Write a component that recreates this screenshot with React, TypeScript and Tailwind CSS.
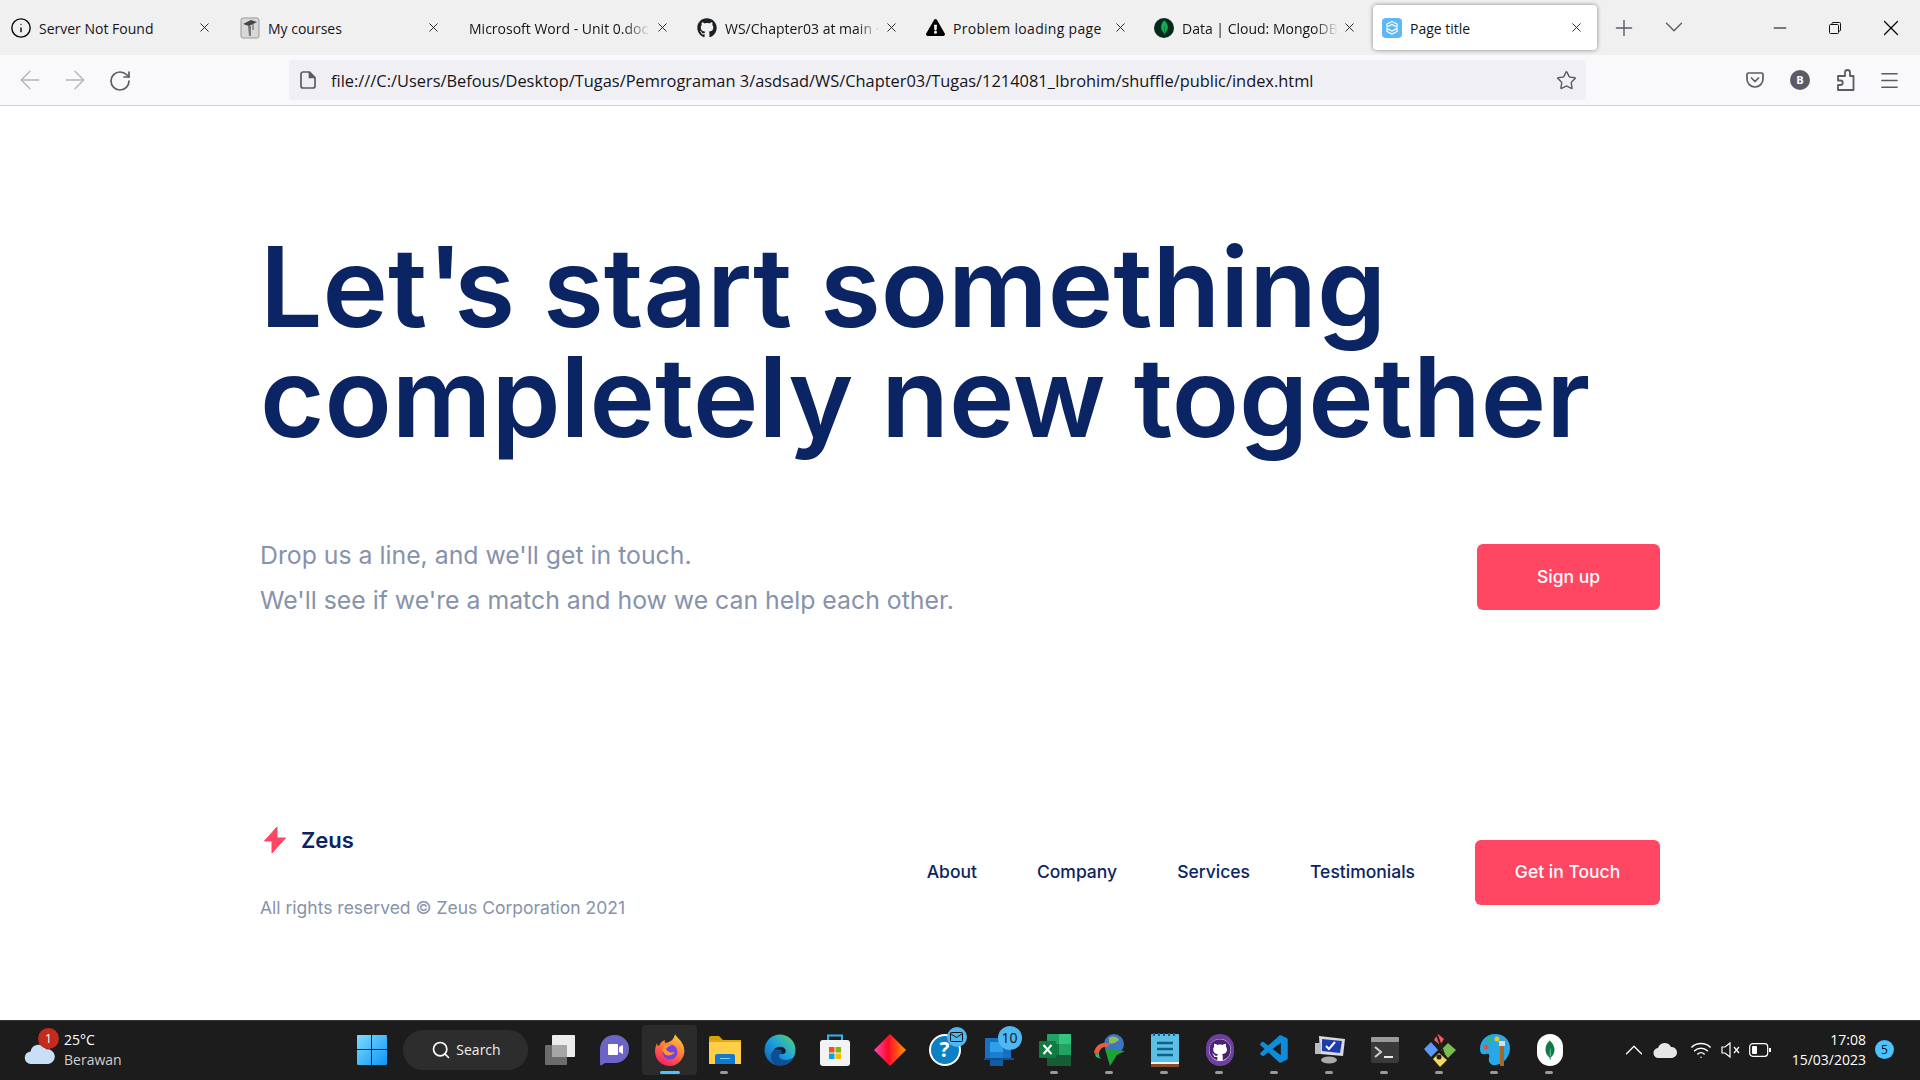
import React from 'react';
import { ArrowLeft, ArrowRight, ChevronDown, ChevronUp, Info, Menu, Minus, Plus, RotateCw, Search, Star, Wifi, X } from 'lucide-react';
import { FaGithub, FaExclamationTriangle } from 'react-icons/fa';
import { SiMongodb } from 'react-icons/si';
import { VscVscode } from 'react-icons/vsc';

const uiFont = { className: "font-['Open_Sans','Noto_Sans',sans-serif]" };

const MoodleIcon = () => (
  <svg width="20" height="22" viewBox="0 0 20 22">
    <rect x="1" y="1" width="18" height="20" rx="2" fill="#d8d8d8" stroke="#999" />
    <path d="M3 7l8-4 6 2-8 4z" fill="#444" />
    <path d="M8 9h3v10H9z" fill="#777" />
    <path d="M13 7v6" stroke="#555" />
  </svg>
);

const MongoTab = () => (
  <span className="w-5 h-5 rounded-full bg-[#04291f] flex items-center justify-center">
    <SiMongodb className="text-[#13aa52] text-[15px]" />
  </span>
);

const PageTitleIcon = () => (
  <svg width="20" height="20" viewBox="0 0 20 20">
    <rect width="20" height="20" rx="4" fill="#5cb8f6" />
    <path d="M10 3.500l5 2.500v3l-5-2.500-5 2.500V6zM5 10.500l5 2.500 5-2.500v3L10 16l-5-2.500z" fill="none" stroke="#fff" strokeWidth="1.2" />
  </svg>
);

const tabs = [
  { title: 'Server Not Found', pad: 'pl-[12px]', icon: <Info size={22} strokeWidth={1.5} className="shrink-0 text-black" /> },
  { title: 'My courses', pad: 'pl-[12px]', icon: <MoodleIcon /> },
  { title: 'Microsoft Word - Unit 0.doc', pad: 'pl-[12px]', fade: true },
  { title: 'WS/Chapter03 at main · Ibrohim', pad: 'pl-[11px]', icon: <FaGithub className="text-[20px] text-[#1b1f23]" />, fade: true },
  { title: 'Problem loading page', pad: 'pl-[10px] tracking-[0.3px]', icon: <FaExclamationTriangle className="text-[19px] text-black" /> },
  { title: 'Data | Cloud: MongoDB Cloud', pad: 'pl-[10px]', icon: <MongoTab />, fade: true },
];

const Tab = ({ title, icon, fade, pad }: { title: string; icon?: React.ReactNode; fade?: boolean; pad: string }) => (
  <div className={`w-[223px] h-[45px] shrink-0 flex items-center pr-[10px] ${pad}`}>
    {icon && <span className="w-5 mr-2 shrink-0 flex justify-center">{icon}</span>}
    <span className={`flex-1 pt-[1px] whitespace-nowrap overflow-hidden text-[14px] text-[#15141a] ${fade ? '[mask-image:linear-gradient(to_right,black_85%,transparent)]' : ''}`}>{title}</span>
    <X size={15} strokeWidth={1.5} className="ml-1 shrink-0 text-[#222]" />
  </div>
);

const PocketIcon = () => (
  <svg width="20" height="20" viewBox="0 0 20 20" fill="none" stroke="#5b5b66" strokeWidth="1.7">
    <path d="M3.500 3h13A1.500 1.500 0 0 1 18 4.500V9a8 8 0 0 1-16 0V4.500A1.500 1.500 0 0 1 3.500 3z" />
    <path d="M6.500 8l3.500 3.500L13.500 8" strokeLinecap="round" strokeLinejoin="round" />
  </svg>
);

const PuzzleIcon = () => (
  <svg width="20" height="22" viewBox="0 0 20 22" fill="none" stroke="#5b5b66" strokeWidth="1.8" strokeLinejoin="round">
    <path d="M6 7h4V3.500a2.500 2.500 0 0 1 5 0V7h3.500v14H3v-5h2.500a2.200 2.200 0 0 0 0-4.500H3V7z" />
  </svg>
);

const RestoreIcon = () => (
  <svg width="12" height="12" viewBox="0 0 12 12" fill="none" stroke="#111" strokeWidth="1">
    <rect x="0.500" y="2.500" width="9" height="9" rx="1" />
    <path d="M3 2.500V1.500a1 1 0 0 1 1-1h6.500a1 1 0 0 1 1 1V8a1 1 0 0 1-1 1h-1" />
  </svg>
);

const BrowserChrome = () => (
  <header className={uiFont.className}>
    <div className="h-[55px] bg-[#f0f0f0] flex items-start pt-[5px] pl-[1px] -ml-[2px]">
      <div className="flex gap-[6px]">
        {tabs.map((tab) => (
          <Tab key={tab.title} {...tab} />
        ))}
        <div className="w-[224px] h-[45px] shrink-0 bg-white rounded-[4px] shadow-[0_0_4px_rgba(0,0,0,0.45)] flex items-center pl-[9px] pr-[13px]">
          <PageTitleIcon />
          <span className="ml-[8px] pt-[1px] flex-1 text-[14px] text-[#15141a]">Page title</span>
          <X size={15} strokeWidth={1.5} className="text-[#222]" />
        </div>
      </div>
      <Plus size={26} strokeWidth={1.3} className="ml-[14px] mt-[10px] text-[#5b5b66]" />
      <ChevronDown size={30} strokeWidth={1.1} className="ml-[22px] mt-[7px] text-[#5b5b66]" />
      <div className="ml-auto flex items-center h-[45px]">
        <Minus size={20} strokeWidth={1.2} className="mr-[39px] text-black" />
        <span className="mr-[37px]"><RestoreIcon /></span>
        <X size={26} strokeWidth={1.1} className="mr-[16px] text-black" />
      </div>
    </div>
    <div className="h-[51px] bg-[#f9f9fb] border-b border-[#cfcfd8] flex items-center">
      <ArrowLeft size={30} strokeWidth={1.1} className="ml-[15px] text-[#b4b4ba]" />
      <ArrowRight size={30} strokeWidth={1.1} className="ml-[15px] text-[#b4b4ba]" />
      <RotateCw size={24} strokeWidth={1.7} className="ml-[18px] mt-[1px] text-[#5b5b66]" />
      <div className="ml-[157px] w-[1297px] h-[40px] rounded-[4px] bg-[#f0f0f4] flex items-center pl-[11px] pr-[9px]">
        <svg width="16" height="18" viewBox="0 0 16 18" fill="none" stroke="#5b5b66" strokeWidth="1.7">
          <path d="M3 1h6.500L15 6.500V15a2 2 0 0 1-2 2H3a2 2 0 0 1-2-2V3a2 2 0 0 1 2-2z" />
          <path d="M9.500 1v5.500H15" fill="#5b5b66" />
        </svg>
        <span className="ml-[15px] pt-[3px] flex-1 text-[16.400px] text-[#15141a] whitespace-nowrap">file:///C:/Users/Befous/Desktop/Tugas/Pemrograman 3/asdsad/WS/Chapter03/Tugas/1214081_Ibrohim/shuffle/public/index.html</span>
        <Star size={21} strokeWidth={1.6} className="text-[#5b5b66]" />
      </div>
      <span className="ml-[159px]"><PocketIcon /></span>
      <span className="ml-[25px] w-5 h-5 rounded-full bg-[#5b5b66] text-white text-[11px] font-bold flex items-center justify-center">B</span>
      <span className="ml-[25px]"><PuzzleIcon /></span>
      <Menu size={23} strokeWidth={1.4} className="ml-[23px] text-[#5b5b66]" />
    </div>
  </header>
);

const Hero = () => (
  <main className="flex-1 bg-white font-['Inter',sans-serif] pl-[260px] pr-[260px] pt-[126px]">
    <h1 className="text-[110.700px] leading-[110px] font-semibold text-[#0b2463] whitespace-nowrap">
      Let<span className="tracking-[-0.08em]">'</span>s start something<br />completely new together
    </h1>
    <div className="mt-[81px] flex items-center justify-between">
      <div className="text-[24.800px] leading-[45px] text-[#8792ab]">
        <p>Drop us a line, and we'll get in touch.</p>
        <p>We'll see if we're a match and how we can help each other.</p>
      </div>
      <button className="w-[183px] h-[66px] mb-[2px] rounded-md bg-[#ff4663] text-white text-[17.500px] font-medium">Sign up</button>
    </div>
    <footer className="mt-[199px] flex items-center justify-between">
      <div className="pt-[2px]">
        <div className="flex items-center">
          <svg width="22" height="26" viewBox="0 0 22 26" className="ml-[4px]">
            <path d="M13 0L0.500 14H8L8 26L21.500 11H13z" fill="#ff4663" stroke="#ff4663" strokeLinejoin="round" />
          </svg>
          <span className="ml-[15px] text-[22px] leading-[32px] font-semibold text-[#0b2463]">Zeus</span>
        </div>
        <p className="mt-[38px] text-[17.500px] leading-[28px] text-[#8792ab]">All rights reserved © Zeus Corporation 2021</p>
      </div>
      <nav className="flex items-center gap-[60px] text-[17.500px] font-medium text-[#0b2463]">
        <a>About</a>
        <a>Company</a>
        <a>Services</a>
        <a>Testimonials</a>
        <button className="w-[185px] h-[65px] rounded-md bg-[#ff4663] text-white font-medium">Get in Touch</button>
      </nav>
    </footer>
  </main>
);

const WinLogo = () => (
  <svg width="30" height="30" viewBox="0 0 30 30">
    <defs>
      <linearGradient id="win" x1="0" y1="0" x2="1" y2="1">
        <stop offset="0" stopColor="#7fdcfd" />
        <stop offset="1" stopColor="#0d95f5" />
      </linearGradient>
    </defs>
    <path d="M0 1a1 1 0 0 1 1-1h13v14H0zM15 0h14a1 1 0 0 1 1 1v13H15zM0 15h14v15H1a1 1 0 0 1-1-1zM15 15h15v14a1 1 0 0 1-1 1H15z" fill="url(#win)" />
  </svg>
);

const TaskViewIcon = () => (
  <svg width="30" height="30" viewBox="0 0 30 30">
    <rect x="0" y="10" width="22" height="20" rx="1" fill="#6c6c6c" />
    <rect x="7" y="0" width="23" height="22" rx="1" fill="#ececec" />
    <rect x="7" y="10" width="15" height="12" fill="#a6a6a6" />
  </svg>
);

const MeetIcon = () => (
  <svg width="30" height="32" viewBox="0 0 30 32">
    <path d="M15 1a14 14 0 0 1 0 28H5l-3 2c-1 1-2 0-2-1V15A14 14 0 0 1 15 1z" fill="#6d64c8" />
    <rect x="8" y="10" width="10" height="11" rx="1" fill="#fff" />
    <path d="M19 13l4-2v9l-4-2z" fill="#fff" />
  </svg>
);

const FirefoxIcon = () => (
  <svg width="30" height="32" viewBox="0 0 30 32">
    <defs>
      <linearGradient id="ffbody" x1="0.700" y1="0" x2="0.200" y2="1">
        <stop offset="0" stopColor="#ffc83a" />
        <stop offset="0.500" stopColor="#ff7139" />
        <stop offset="1" stopColor="#f5156c" />
      </linearGradient>
    </defs>
    <path d="M20 0c1 3 5 5 7 9 3 5 3 10 1 14-3 6-8 9-13 9C7 32 0 26 0 17c0-3 1-6 2-8 0 2 1 3 2 3 1-3 3-5 6-6-1 2 0 3 1 3 4-1 8-3 9-9z" fill="url(#ffbody)" />
    <circle cx="15" cy="18" r="7.500" fill="#7542e5" />
    <path d="M8 13c2-2 6-3 9-2-3 1-5 2-6 4 1 3 5 4 9 3-2 3-6 4-9 3-3-2-4-5-3-8z" fill="#ff9a2e" />
  </svg>
);

const FolderIcon = () => (
  <svg width="32" height="28" viewBox="0 0 32 28">
    <path d="M0 2a2 2 0 0 1 2-2h8l4 4h-14z" fill="#d9a106" />
    <path d="M0 4h32v24H0z" fill="#ffcf49" />
    <path d="M0 4h32v2H0z" fill="#e2a90f" />
    <path d="M6 20a2 2 0 0 1 2-2h16a2 2 0 0 1 2 2v8H6z" fill="#0f7ad1" />
    <path d="M11 22h10v1H11z" fill="#8fd0ff" />
  </svg>
);

const EdgeIcon = () => (
  <svg width="32" height="32" viewBox="0 0 32 32">
    <defs>
      <linearGradient id="edge" x1="0" y1="1" x2="1" y2="0">
        <stop offset="0" stopColor="#0c59a4" />
        <stop offset="0.500" stopColor="#1b9de2" />
        <stop offset="1" stopColor="#5ad66f" />
      </linearGradient>
    </defs>
    <circle cx="16" cy="16" r="15.500" fill="url(#edge)" />
    <path d="M12 31C6 28 5 20 10 16c4-3 10-2 11 1 1 2-1 3-4 3-2 0-3 3 0 5 4 2 9 1 13-2-3 6-10 10-18 8z" fill="#0c4f96" />
    <path d="M17 20c4 0 6-2 4-5s-9-3-11 1c2-1 5-1 7 0 1 1 1 3 0 4z" fill="#1c1c1c" />
  </svg>
);

const StoreIcon = () => (
  <svg width="30" height="32" viewBox="0 0 30 32">
    <rect x="0" y="6" width="30" height="26" rx="3" fill="#f3f3f3" />
    <path d="M8 6V1.500h14V6" fill="none" stroke="#29b6f6" strokeWidth="2" />
    <rect x="9" y="13" width="5.500" height="5.500" fill="#f25022" />
    <rect x="15.500" y="13" width="5.500" height="5.500" fill="#7fba00" />
    <rect x="9" y="19.500" width="5.500" height="5.500" fill="#00a4ef" />
    <rect x="15.500" y="19.500" width="5.500" height="5.500" fill="#ffb900" />
  </svg>
);

const DiamondIcon = () => (
  <svg width="32" height="32" viewBox="0 0 32 32">
    <defs>
      <linearGradient id="diamond" x1="0" y1="0" x2="1" y2="0">
        <stop offset="0" stopColor="#ff47b0" />
        <stop offset="0.450" stopColor="#ff0a2a" />
        <stop offset="1" stopColor="#ff9900" />
      </linearGradient>
    </defs>
    <path d="M16 0l16 16-16 16L0 16z" fill="url(#diamond)" />
  </svg>
);

const HelpIcon = () => (
  <span className="relative w-8 h-8 rounded-full bg-[#0d7fc4] border-2 border-white flex items-center justify-center text-white font-bold text-[21px] leading-none">
    ?
    <span className="absolute -top-[9px] -right-[8px] w-5 h-5 rounded-full bg-[#4fb8f0] flex items-center justify-center">
      <svg width="13" height="10" viewBox="0 0 13 10" fill="none" stroke="#111" strokeWidth="1">
        <rect x="0.500" y="0.500" width="12" height="9" rx="1" />
        <path d="M0.500 1.500l6 4 6-4" />
      </svg>
    </span>
  </span>
);

const MsIcon = () => (
  <span className="relative w-8 h-8 flex items-end">
    <svg width="30" height="30" viewBox="0 0 30 30">
      <rect x="1" y="2" width="26" height="21" fill="#1b6fc2" />
      <rect x="6" y="6" width="13" height="24" fill="#2f9fe8" />
      <rect x="6" y="16" width="13" height="7" fill="#1b7fd0" />
      <rect x="6" y="23" width="13" height="7" fill="#125ba6" />
      <rect x="0" y="22" width="30" height="2" fill="#0f4f8f" />
    </svg>
    <span className="absolute -top-[8px] -right-[6px] w-[24px] h-[24px] rounded-full bg-[#4fb8f0] text-[#111] text-[14px] flex items-center justify-center">10</span>
  </span>
);

const ExcelIcon = () => (
  <svg width="32" height="32" viewBox="0 0 32 32">
    <rect x="8" y="0" width="24" height="32" rx="1" fill="#21a366" />
    <rect x="20" y="0" width="12" height="10" fill="#33c481" />
    <rect x="20" y="10" width="12" height="11" fill="#21a366" />
    <rect x="8" y="10" width="12" height="11" fill="#107c41" />
    <rect x="8" y="21" width="24" height="11" fill="#185c37" />
    <rect x="0" y="7" width="17" height="17" rx="1" fill="#107c41" />
    <path d="M4.500 11l8 9M12.500 11l-8 9" stroke="#fff" strokeWidth="2" />
  </svg>
);

const IdmIcon = () => (
  <svg width="34" height="34" viewBox="0 0 34 34">
    <circle cx="21" cy="11" r="10" fill="#3d74c4" />
    <path d="M16 5c4-3 9-1 10 2-3 2-6 5-10 3z" fill="#8fbf4f" />
    <path d="M1 20a11 11 0 0 1 16-9l-2 3a7 7 0 0 0-9 7z" fill="#e95d3c" />
    <path d="M3 24a11 11 0 0 1-1-4l4 1a7 7 0 0 0 2 5z" fill="#38b46a" />
    <path d="M12 16l20 2-8 4-7 11z" fill="#1ba432" />
  </svg>
);

const NotepadIcon = () => (
  <svg width="28" height="34" viewBox="0 0 28 34">
    <rect x="0" y="1" width="28" height="33" rx="1" fill="#5bbfe6" />
    <rect x="0" y="31" width="28" height="3" fill="#8a4d2b" />
    <rect x="0" y="29" width="28" height="2" fill="#f1f1f1" />
    <path d="M3 0v3M8 0v3M13 0v3M18 0v3M23 0v3" stroke="#175e80" strokeWidth="2" />
    <path d="M6 10h16M6 16h16M6 22h16" stroke="#125f87" strokeWidth="2.500" />
  </svg>
);

const GitHubDesktop = () => (
  <span className="w-7 h-8 rounded-full bg-[#6f3f9e] flex items-center justify-center">
    <span className="w-[22px] h-[22px] rounded-full bg-white flex items-center justify-center">
      <FaGithub className="text-[22px] text-[#4b2374]" />
    </span>
  </span>
);

const AdminIcon = () => (
  <svg width="32" height="32" viewBox="0 0 32 32">
    <path d="M5 2l26 3-2 17-23-2z" fill="#d7dce2" />
    <path d="M8 5l20 2-2 12-18-2z" fill="#1e3bb0" />
    <path d="M12 12l3 3 6-7" stroke="#fff" strokeWidth="2" fill="none" />
    <ellipse cx="15" cy="26" rx="8" ry="3.500" fill="#aaa" />
    <rect x="1" y="9" width="6" height="11" fill="#b8bdc4" />
  </svg>
);

const TerminalIcon = () => (
  <svg width="28" height="26" viewBox="0 0 28 26">
    <rect width="28" height="26" rx="2" fill="#3a3a3a" />
    <rect width="28" height="5" rx="1" fill="#9a9a9a" />
    <path d="M4 10l6 5-6 5" stroke="#cfcfcf" strokeWidth="2" fill="none" />
    <path d="M13 20h9" stroke="#e6e6e6" strokeWidth="2" />
  </svg>
);

const GitExtIcon = () => (
  <svg width="32" height="34" viewBox="0 0 32 34">
    <path d="M14 1l6 5-4 6-6-5z" fill="#f45d5d" />
    <path d="M7 9l7 8-7 7-7-8z" fill="#5b9bf5" />
    <path d="M24 10l8 7-8 8-7-8z" fill="#7bbd4c" />
    <path d="M15 20l8 7-7 7-7-8z" fill="#f2d95c" />
    <path d="M13 2l8 22" stroke="#222" strokeWidth="2" />
    <circle cx="17" cy="13" r="2.500" fill="#222" />
    <circle cx="15" cy="24" r="2.500" fill="#222" />
  </svg>
);

const PaintIcon = () => (
  <svg width="30" height="32" viewBox="0 0 30 32">
    <path d="M15 0C6 0 0 7 0 15c0 5 3 6 6 5 3-1 4 1 3 4s1 8 7 7c8-1 14-9 14-17C30 6 24 0 15 0z" fill="#29a8e8" />
    <circle cx="6" cy="13" r="2.500" fill="#e5532d" />
    <circle cx="10" cy="6" r="2.500" fill="#2dbb6a" />
    <circle cx="17" cy="5" r="2.500" fill="#f5c518" />
    <rect x="20" y="10" width="4" height="22" fill="#a5682a" />
    <rect x="19" y="7" width="6" height="5" fill="#ddd" />
  </svg>
);

const MongoTask = () => (
  <span className="w-[26px] h-[32px] rounded-full bg-white flex items-center justify-center">
    <SiMongodb className="text-[#0e7a45] text-[20px]" />
  </span>
);

const apps: { key: string; icon: React.ReactNode; dot?: boolean; active?: boolean }[] = [
  { key: 'taskview', icon: <TaskViewIcon /> },
  { key: 'meet', icon: <MeetIcon /> },
  { key: 'firefox', icon: <FirefoxIcon />, active: true },
  { key: 'files', icon: <FolderIcon />, dot: true },
  { key: 'edge', icon: <EdgeIcon /> },
  { key: 'store', icon: <StoreIcon /> },
  { key: 'diamond', icon: <DiamondIcon /> },
  { key: 'help', icon: <HelpIcon /> },
  { key: 'ms', icon: <MsIcon /> },
  { key: 'excel', icon: <ExcelIcon />, dot: true },
  { key: 'idm', icon: <IdmIcon />, dot: true },
  { key: 'notepad', icon: <NotepadIcon />, dot: true },
  { key: 'github', icon: <GitHubDesktop />, dot: true },
  { key: 'vscode', icon: <VscVscode className="text-[34px] text-[#0f8bd9]" />, dot: true },
  { key: 'admin', icon: <AdminIcon />, dot: true },
  { key: 'terminal', icon: <TerminalIcon />, dot: true },
  { key: 'git', icon: <GitExtIcon />, dot: true },
  { key: 'paint', icon: <PaintIcon />, dot: true },
  { key: 'mongo', icon: <MongoTask />, dot: true },
];

const Taskbar = () => (
  <div className={`h-[60px] bg-[#1c1c1c] border-t border-[#333] flex items-center pb-[2px] ${uiFont.className}`}>
    <div className="w-[344px] flex items-center pl-[24px] shrink-0">
      <span className="relative w-[32px] h-[21px] mt-[8px]">
        <svg width="32" height="21" viewBox="0 0 30 20">
          <path d="M7 20a6 6 0 0 1-1-12 8 8 0 0 1 15-2 7 7 0 0 1 2 14z" fill="#c8dff7" />
        </svg>
        <span className="absolute -top-[15px] left-[14px] w-[21px] h-[21px] rounded-full bg-[#c42b1c] text-white text-[12px] flex items-center justify-center">1</span>
      </span>
      <div className="ml-[8px] text-[14px] leading-[20px]">
        <p className="text-white">25°C</p>
        <p className="text-[#cfcfcf]">Berawan</p>
      </div>
    </div>
    <div className="w-[55px] shrink-0 flex justify-center">
      <WinLogo />
    </div>
    <div className="ml-[4px] w-[125px] h-[40px] shrink-0 rounded-full bg-[#2d2d2d] flex items-center justify-center pl-[1px] text-[14px] text-[#eee]">
      <Search size={20} strokeWidth={2} className="mr-[5px] text-white" />
      Search
    </div>
    <div className="ml-[4px] flex shrink-0">
      {apps.map((app) => (
        <div key={app.key} className={`relative w-[55px] h-[50px] flex items-center justify-center rounded-[4px] ${app.active ? 'bg-[#2b2b2b]' : ''}`}>
          {app.icon}
          {app.dot && <span className="absolute bottom-[1px] left-[23px] w-2 h-[3px] rounded-full bg-[#9a9a9a]" />}
          {app.active && <span className="absolute bottom-[1px] left-[18px] w-5 h-[3px] rounded-full bg-[#4cc2ff]" />}
        </div>
      ))}
    </div>
    <div className="ml-auto flex items-center text-white shrink-0">
      <ChevronUp size={30} strokeWidth={1} />
      <svg width="24" height="16" viewBox="0 0 24 16" className="ml-[4px]">
        <path d="M6 16a5 5 0 0 1-1-10 7 7 0 0 1 13-1 5.500 5.500 0 0 1 1 11z" fill="#e6e6e6" />
      </svg>
      <Wifi size={22} strokeWidth={1.6} className="ml-[13px]" />
      <svg width="20" height="18" viewBox="0 0 20 18" fill="none" stroke="#fff" strokeWidth="1.2" className="ml-[9px]">
        <path d="M1 6h3l5-4v14l-5-4H1zM13 6l5 6M18 6l-5 6" />
      </svg>
      <svg width="22" height="14" viewBox="0 0 22 14" fill="none" className="ml-[8px]">
        <rect x="0.700" y="0.700" width="18" height="12.600" rx="3" stroke="#fff" strokeWidth="1.200" />
        <rect x="3" y="3" width="5" height="8" rx="1" fill="#fff" />
        <rect x="20" y="5" width="2" height="4" fill="#fff" />
      </svg>
      <div className="ml-[21px] text-right text-[14px] leading-[20px] text-white">
        <p>17:08</p>
        <p>15/03/2023</p>
      </div>
      <span className="ml-[9px] mr-[26px] w-[19px] h-[19px] rounded-full bg-[#4cc2ff] text-[#111] text-[12px] flex items-center justify-center">5</span>
    </div>
  </div>
);

export default function App() {
  return (
    <div className="w-[1920px] h-[1080px] flex flex-col overflow-hidden bg-white">
      <BrowserChrome />
      <Hero />
      <Taskbar />
    </div>
  );
}
